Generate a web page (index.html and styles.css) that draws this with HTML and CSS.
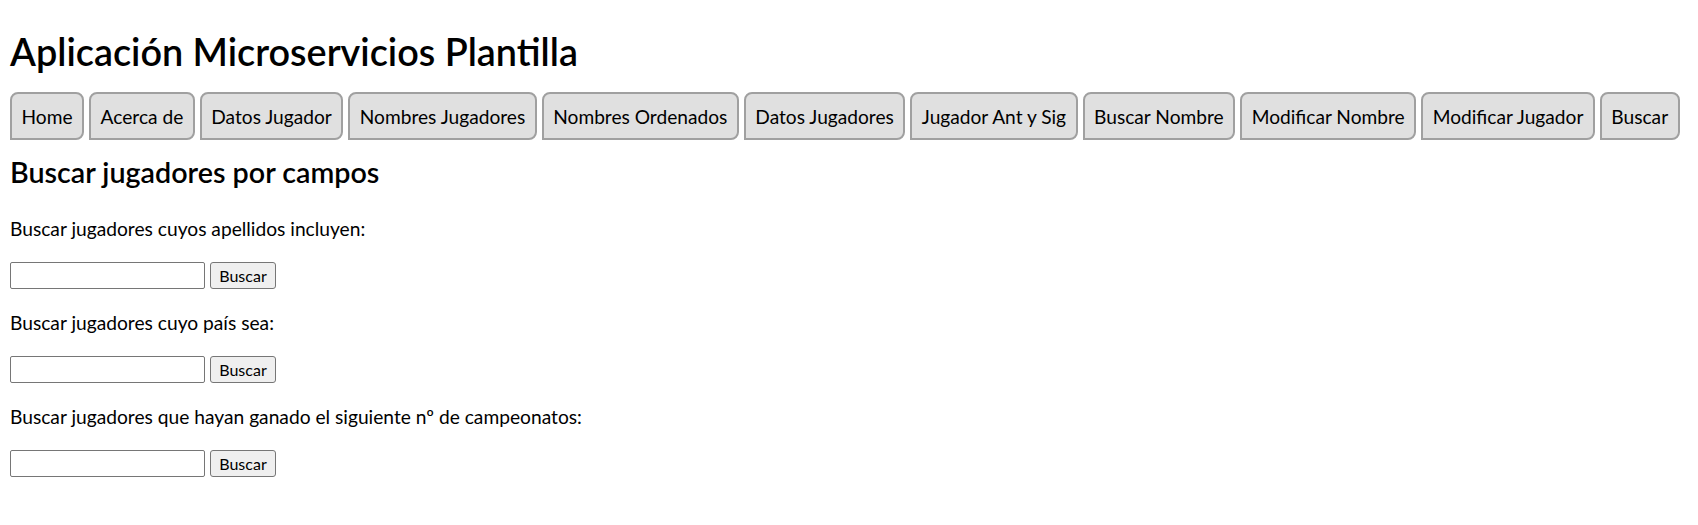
FILE: index.html
```html
<!DOCTYPE html>
<html lang="es">
<head>
<meta charset="utf-8">
<title>Aplicación Microservicios Plantilla</title>
<link rel="stylesheet" href="styles.css">
</head>
<body>
<h1 class="title">Aplicación Microservicios Plantilla</h1>
<nav class="tabs">
  <a class="tab">Home</a>
  <a class="tab">Acerca de</a>
  <a class="tab">Datos Jugador</a>
  <a class="tab">Nombres Jugadores</a>
  <a class="tab">Nombres Ordenados</a>
  <a class="tab">Datos Jugadores</a>
  <a class="tab">Jugador Ant y Sig</a>
  <a class="tab">Buscar Nombre</a>
  <a class="tab">Modificar Nombre</a>
  <a class="tab">Modificar Jugador</a>
  <a class="tab">Buscar</a>
</nav>
<h2 class="subtitle">Buscar jugadores por campos</h2>
<p class="label">Buscar jugadores cuyos apellidos incluyen:</p>
<div class="row"><input class="field" type="text"><button class="btn">Buscar</button></div>
<p class="label">Buscar jugadores cuyo país sea:</p>
<div class="row"><input class="field" type="text"><button class="btn">Buscar</button></div>
<p class="label">Buscar jugadores que hayan ganado el siguiente nº de campeonatos:</p>
<div class="row"><input class="field" type="text"><button class="btn">Buscar</button></div>
</body>
</html>
```

FILE: styles.css
```css
html, body {
  background: #ffffff;
}
body {
  margin: 0;
  padding: 0 10px;
  font-family: Lato, "Noto Sans", sans-serif;
  color: #000000;
}
.title {
  margin: 27px 0 15px;
  font-size: 37.8px;
  line-height: 50px;
  font-weight: 600;
}
.tabs {
  display: flex;
  gap: 5px;
  margin: 0 0 13px;
}
.tab {
  display: block;
  box-sizing: border-box;
  height: 48px;
  padding: 10px 9.5px 0;
  border: 2px solid #a0a0a0;
  border-radius: 8px 8px 8px 0;
  background: #e0e0e0;
  font-size: 19.15px;
  line-height: 25px;
  color: #000000;
  white-space: nowrap;
}
.subtitle {
  margin: 0 0 25px;
  font-size: 28.7px;
  line-height: 38px;
  font-weight: 600;
}
.label {
  margin: 0;
  font-size: 19.2px;
  line-height: 25px;
}
.row {
  display: flex;
  gap: 5px;
  margin: 21px 0;
  height: 27px;
}
.field {
  box-sizing: border-box;
  width: 195px;
  height: 27px;
  margin: 0;
  border: 1px solid #767676;
  border-radius: 2px;
  background: #ffffff;
}
.btn {
  box-sizing: border-box;
  width: 66px;
  height: 27px;
  margin: 0;
  padding: 0;
  border: 1px solid #767676;
  border-radius: 3px;
  background: #efefef;
  font-family: Lato, "Noto Sans", sans-serif;
  font-size: 16px;
  color: #000000;
}
```
